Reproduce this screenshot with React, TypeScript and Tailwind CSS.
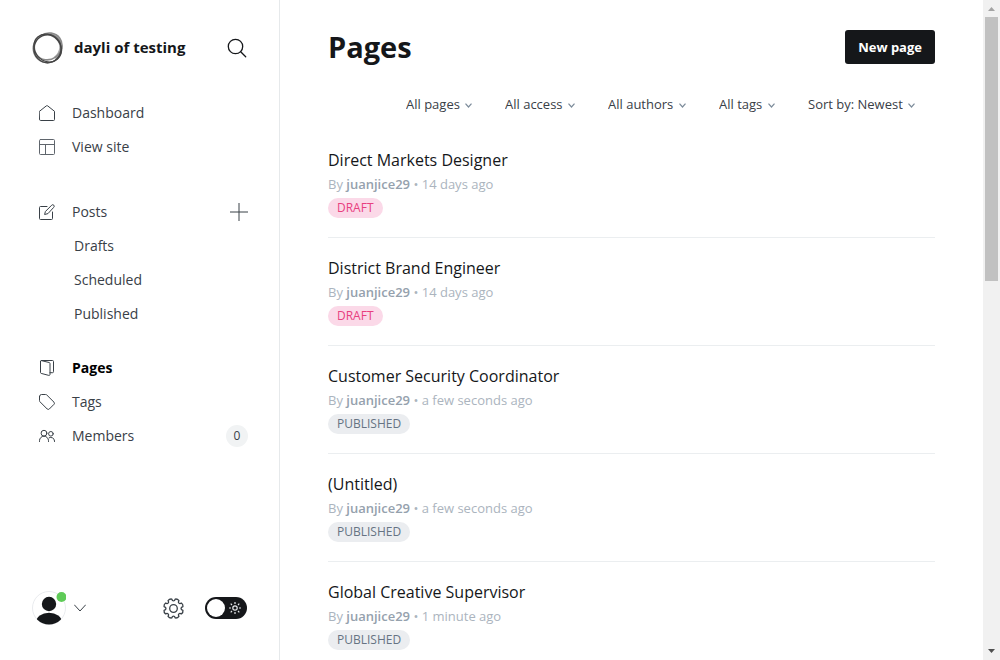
import { useState, type ReactNode } from 'react';

type Status = 'Draft' | 'Published';

const posts: { title: string; author: string; when: string; status: Status }[] = [
  { title: 'Direct Markets Designer', author: 'juanjice29', when: '14 days ago', status: 'Draft' },
  { title: 'District Brand Engineer', author: 'juanjice29', when: '14 days ago', status: 'Draft' },
  { title: 'Customer Security Coordinator', author: 'juanjice29', when: 'a few seconds ago', status: 'Published' },
  { title: '(Untitled)', author: 'juanjice29', when: 'a few seconds ago', status: 'Published' },
  { title: 'Global Creative Supervisor', author: 'juanjice29', when: '1 minute ago', status: 'Published' },
];

const filters = [
  { label: 'Page type', value: 'All pages' },
  { label: 'Access', value: 'All access' },
  { label: 'Author', value: 'All authors' },
  { label: 'Tag', value: 'All tags' },
  { label: 'Order', value: 'Sort by: Newest' },
];

const badgeStyles: Record<Status, string> = {
  Draft: 'bg-[#fbd9e8] text-[#e8407f]',
  Published: 'bg-[#ebedf0] text-[#667383]',
};

function Icon({ children, className = 'size-4' }: { children: ReactNode; className?: string }) {
  return (
    <svg
      viewBox="0 0 16 16"
      className={`shrink-0 ${className}`}
      fill="none"
      stroke="currentColor"
      strokeLinecap="round"
      strokeLinejoin="round"
      aria-hidden="true"
    >
      {children}
    </svg>
  );
}

const HomeIcon = () => (
  <Icon>
    <path d="M.5 6.3 7.3.9a1.1 1.1 0 0 1 1.4 0l6.8 5.4v8.2a1 1 0 0 1-1 1h-13a1 1 0 0 1-1-1z" />
  </Icon>
);

const LayoutIcon = () => (
  <Icon className="size-4 text-[#5f656c]">
    <rect x=".5" y=".5" width="15" height="15" rx="1" />
    <path d="M.5 5.5h15M6.5 5.5v10" />
  </Icon>
);

const ComposeIcon = () => (
  <Icon>
    <path d="M8 2.5H1.5a1 1 0 0 0-1 1v11a1 1 0 0 0 1 1h11a1 1 0 0 0 1-1V8" />
    <path d="m8.6 9.7-3 .8.8-3 6.3-6.3a1.45 1.45 0 0 1 2.1 2.1z" />
  </Icon>
);

const PagesIcon = () => (
  <Icon className="size-4 text-[#394047]">
    <path d="M1.5 1.3v11.2c0 .5.3.8.7.9l7.6 2c.6.2 1.2-.3 1.2-.9V3.5c0-.5-.3-.9-.8-1L2.3.6" />
    <path d="M1.5 1.5c0-.6.4-1 1-1h11a1 1 0 0 1 1 1v10.2a1 1 0 0 1-1 1H11" />
  </Icon>
);

const TagIcon = () => (
  <Icon>
    <path d="M.5 2.5v4.1c0 .4.2.8.4 1.1l7.3 7.3a1.5 1.5 0 0 0 2.1 0l4.7-4.7a1.5 1.5 0 0 0 0-2.1L7.7.9A1.5 1.5 0 0 0 6.6.5H2.5a2 2 0 0 0-2 2z" />
  </Icon>
);

const MembersIcon = () => (
  <Icon>
    <circle cx="5" cy="5.2" r="2.9" />
    <path d="M.5 13.5v-.8a4.5 4.5 0 0 1 9 0v.8" />
    <circle cx="11.9" cy="5.8" r="2.3" />
    <path d="M10.2 9.7a3.7 3.7 0 0 1 5.3 3.3v.5" />
  </Icon>
);

const Logo = () => (
  <svg viewBox="0 0 32 32" className="size-8 shrink-0" fill="none" aria-hidden="true">
    <path d="M19 2.5c6.500 2.500 10.500 8 9.800 13.500-.5 4-2.500 7.500-5.800 10" stroke="#aaa" strokeWidth="3" />
    <circle cx="15.5" cy="16.5" r="14.2" stroke="#777" strokeWidth="1.5" />
    <ellipse cx="17" cy="14.8" rx="14.2" ry="13" stroke="#8a8a8a" strokeWidth="1.6" transform="rotate(-35 16 16)" />
    <ellipse cx="15.8" cy="16.3" rx="14.8" ry="12.8" stroke="#444" strokeWidth="1.2" transform="rotate(48 16 16)" />
    <ellipse cx="15.5" cy="16.8" rx="13.5" ry="14" stroke="#444" strokeWidth="1.2" />
  </svg>
);

const GearIcon = () => {
  const polar = (radius: number, degrees: number) => {
    const angle = (degrees * Math.PI) / 180;
    return `${(10.5 + radius * Math.cos(angle)).toFixed(2)} ${(10.5 + radius * Math.sin(angle)).toFixed(2)}`;
  };
  const teeth = Array.from({ length: 8 }, (_, i) => {
    const a = i * 45 + 22.5;
    return `${polar(8, a - 15)} L${polar(9.6, a - 12)} Q${polar(10.6, a)} ${polar(9.6, a + 12)} L${polar(8, a + 15)} Q${polar(7.2, a + 22.5)} ${polar(8, a + 30)}`;
  });
  return (
    <svg viewBox="0 0 21 21" className="size-[21px]" fill="none" stroke="currentColor" strokeWidth="1.3" strokeLinejoin="round" aria-hidden="true">
      <path d={`M${teeth.join(' L')}Z`} />
      <circle cx="10.5" cy="10.5" r="3.8" />
    </svg>
  );
};

const SunIcon = () => (
  <svg viewBox="0 0 12 12" className="pointer-events-none col-start-1 row-start-1 mr-1.5 size-3 justify-self-end" fill="none" stroke="#e5e7ea" strokeWidth="1.2" aria-hidden="true">
    <circle cx="6" cy="6" r="2.2" />
    <path d="M6 0v2M6 10v2M0 6h2M10 6h2M1.7 1.7 3 3M9 9l1.3 1.3M1.7 10.3 3 9M9 3l1.3-1.3" />
  </svg>
);

const Avatar = () => (
  <svg viewBox="0 0 34 34" className="size-[34px]" aria-hidden="true">
    <clipPath id="avatar-clip">
      <circle cx="17" cy="17" r="16.5" />
    </clipPath>
    <circle cx="17" cy="17" r="16.5" fill="#fff" stroke="#e9ebee" />
    <g clipPath="url(#avatar-clip)" fill="#15171a">
      <circle cx="17" cy="13" r="7.2" />
      <ellipse cx="17" cy="31.5" rx="13" ry="9.8" />
    </g>
    <circle cx="29.500" cy="6" r="5" fill="#5fcb58" />
  </svg>
);

function NavItem({ icon, label, active = false, extra }: { icon: ReactNode; label: string; active?: boolean; extra?: ReactNode }) {
  return (
    <li className="flex h-[34px] items-center justify-between pr-[31px] pl-[39px]">
      <a
        href="#"
        aria-current={active ? 'page' : undefined}
        className={active ? 'flex items-center gap-[17px] font-bold text-black' : 'flex items-center gap-[17px]'}
      >
        {icon}
        {label}
      </a>
      {extra}
    </li>
  );
}

function Sidebar() {
  const [night, setNight] = useState(false);
  return (
    <aside className="flex w-[280px] shrink-0 flex-col border-r border-[#e6e9eb] text-sm text-[#394047]">
      <header className="flex h-24 items-center gap-2.5 px-8">
        <Logo />
        <span className="flex-1 text-[15px] font-bold text-[#15171a]">dayli of testing</span>
        <button type="button" aria-label="Search" className="text-[#15171a]">
          <svg viewBox="0 0 20 20" className="size-5" fill="none" stroke="currentColor" strokeWidth="1.3" strokeLinecap="round" aria-hidden="true">
            <circle cx="8.5" cy="8.5" r="7.2" />
            <path d="m13.7 13.7 5 5" />
          </svg>
        </button>
      </header>

      <nav className="flex-1" aria-label="Main">
        <ul>
          <NavItem icon={<HomeIcon />} label="Dashboard" />
          <NavItem icon={<LayoutIcon />} label="View site" />
        </ul>
        <ul className="mt-[31px]">
          <NavItem
            icon={<ComposeIcon />}
            label="Posts"
            extra={
              <button type="button" aria-label="New post">
                <svg viewBox="0 0 18 18" className="size-[18px]" stroke="currentColor" aria-hidden="true">
                  <path d="M9 0v18M0 9h18" />
                </svg>
              </button>
            }
          />
          {['Drafts', 'Scheduled', 'Published'].map((label) => (
            <li key={label} className="flex h-[34px] items-center pl-[74px]">
              <a href="#">{label}</a>
            </li>
          ))}
        </ul>
        <ul className="mt-5">
          <NavItem icon={<PagesIcon />} label="Pages" active />
          <NavItem icon={<TagIcon />} label="Tags" />
          <NavItem
            icon={<MembersIcon />}
            label="Members"
            extra={<span className="flex size-[22px] items-center justify-center rounded-full bg-[#f1f3f4] text-xs font-medium">0</span>}
          />
        </ul>
      </nav>

      <footer className="flex items-center justify-between px-8 pb-[35px]">
        <button type="button" aria-label="Account menu" className="flex items-center gap-2">
          <Avatar />
          <svg viewBox="0 0 12 8" className="h-2 w-3" fill="none" stroke="currentColor" strokeLinecap="round" strokeLinejoin="round" aria-hidden="true">
            <path d="m.5 1 5.5 6 5.5-6" />
          </svg>
        </button>
        <div className="flex items-center gap-[21px]">
          <a href="#" aria-label="Settings">
            <GearIcon />
          </a>
          <label className="grid items-center">
            <input
              type="checkbox"
              role="switch"
              aria-label="Night mode"
              checked={night}
              onChange={(event) => setNight(event.target.checked)}
              className="col-start-1 row-start-1 h-[22px] w-[42px] appearance-none rounded-full bg-[#15171a] p-0.5 before:block before:size-[18px] before:rounded-full before:bg-white checked:before:ml-auto"
            />
            <SunIcon />
          </label>
        </div>
      </footer>
    </aside>
  );
}

function Filter({ label, value }: { label: string; value: string }) {
  return (
    <label className="grid items-center">
      <select aria-label={label} className="col-start-1 row-start-1 h-6 appearance-none bg-transparent pr-3 text-[13px]">
        <option>{value}</option>
      </select>
      <svg viewBox="0 0 7 5" className="pointer-events-none col-start-1 row-start-1 h-[5px] w-[7px] justify-self-end" fill="none" stroke="#7c8b9a" strokeWidth="1.2" aria-hidden="true">
        <path d="m.5.7 3 3.3 3-3.3" />
      </svg>
    </label>
  );
}

function Scrollbar() {
  return (
    <div className="flex w-[17px] shrink-0 flex-col items-center bg-[#f1f1f1]" aria-hidden="true">
      <svg viewBox="0 0 17 17" className="size-[17px] shrink-0" fill="#a3a3a3">
        <path d="M5 11h7L8.5 7z" />
      </svg>
      <div className="h-2/5 w-[13px] bg-[#c1c1c1]" />
      <svg viewBox="0 0 17 17" className="mt-auto size-[17px] shrink-0" fill="#505050">
        <path d="M5 6h7l-3.5 4z" />
      </svg>
    </div>
  );
}

export default function App() {
  return (
    <div className="flex h-screen bg-white font-['Open_Sans',sans-serif] text-[#394047]">
      <Sidebar />
      <main className="min-w-0 flex-1 overflow-hidden px-12">
        <header className="flex items-center justify-between pt-[30px]">
          <h1 className="text-[29px] leading-[34px] font-bold text-[#15171a]">Pages</h1>
          <button type="button" className="h-[34px] rounded-[3px] bg-[#15171a] px-[13px] pt-0.5 text-[13px] font-bold text-white">
            New page
          </button>
        </header>
        <div className="mt-[29px] mb-[13px] flex justify-end gap-[33px] pr-5">
          {filters.map((filter) => (
            <Filter key={filter.label} {...filter} />
          ))}
        </div>
        <ol>
          {posts.map((post) => (
            <li key={post.title} className="border-b border-[#ebeef0] pt-[18px] pb-[19px]">
              <h2 className="text-base leading-6 font-medium text-[#15171a]">
                <a href="#">{post.title}</a>
              </h2>
              <p className="text-[13px] leading-6 text-[#abb4be]">
                By <span className="font-semibold text-[#95a1ad]">{post.author}</span> • {post.when}
              </p>
              <span className={`mt-0.5 block w-fit rounded-full px-[9px] text-xs leading-5 font-medium uppercase ${badgeStyles[post.status]}`}>
                {post.status}
              </span>
            </li>
          ))}
        </ol>
      </main>
      <Scrollbar />
    </div>
  );
}
